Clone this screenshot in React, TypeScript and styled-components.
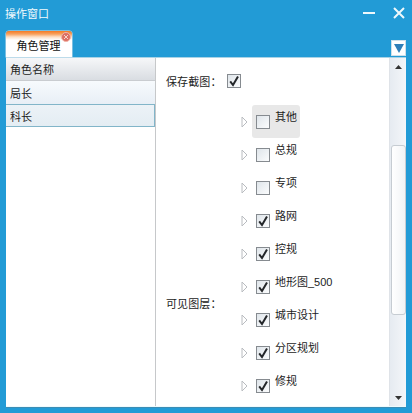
import React from "react";
import styled, { createGlobalStyle } from "styled-components";

const Global = createGlobalStyle`
  html, body { margin: 0; padding: 0; background: #229bd6; }
  * { box-sizing: border-box; }
`;

const Win = styled.div`
  width: 412px; height: 413px; background: #229bd6; overflow: hidden;
  display: flex; flex-direction: column;
  font-family: "Liberation Sans", "Noto Sans CJK SC", sans-serif;
  font-size: 11px; color: #222;
`;
const TitleBar = styled.div`
  height: 30px; flex: none; display: flex; align-items: center; justify-content: space-between;
  padding: 0 7px 5px 5px; color: #f2fafd; font-size: 11px;
`;
const Controls = styled.div`display: flex; align-items: center; gap: 18px;`;
const TabStrip = styled.div`
  height: 27px; flex: none; display: flex; justify-content: space-between; align-items: flex-end;
  padding: 0 6px;
`;
const Tab = styled.div`
  position: relative; width: 66px; height: 26px; border-radius: 3px 3px 0 0;
  background: linear-gradient(#f47a24 0, #f8a05c 3px, #fde0c8 6px, #fff 9px);
  display: flex; align-items: center; justify-content: center; padding: 2px 1px 0 0;
  color: #111; font-size: 11px; box-shadow: 0 0 0 0.5px #cfe3ee;
`;
const TabClose = styled.span`
  position: absolute; top: 1px; right: 1px; width: 10px; height: 10px; border-radius: 50%;
  background: #dd6f62; border: 1px solid #f0b4a8;
  display: flex; align-items: center; justify-content: center;
`;
const Collapse = styled.div`
  width: 15px; height: 16px; background: #fff; border: 1px solid #cfe0ea;
  display: flex; align-items: center; justify-content: center; margin-bottom: 1px;
`;
const Panel = styled.div`
  height: 350px; flex: none; margin: 0 6px; background: #fff; display: flex;
  border-top: 1px solid #a9d3e6; border-bottom: 1px solid #eefafd; box-shadow: 0 1px 0 #3b8db5;
`;
const Side = styled.div`width: 150px; flex: none; border-right: 1px solid #c6c8ca; display: flex; flex-direction: column;`;
const SideHead = styled.div`
  height: 23px; display: flex; align-items: center; padding-left: 4px;
  background: linear-gradient(#f6f7f9, #d9dde2); border-bottom: 1px solid #c9ccd0;
`;
const SideRow = styled.div<{ $selected?: boolean }>`
  height: ${(p) => (p.$selected ? "23px" : "23px")}; display: flex; align-items: center; padding-left: 4px;
  background: ${(p) => (p.$selected ? "linear-gradient(#ecf2f7,#e4edf3)" : "linear-gradient(#f7fafd,#e8eff6)")};
  border: ${(p) => (p.$selected ? "1px solid #82b5c9" : "none")};
  border-left-width: ${(p) => (p.$selected ? "0" : "0")};
`;
const Main = styled.div`flex: 1; overflow: hidden; display: flex; flex-direction: column; padding: 14px 0 0 10px;`;
const SaveRow = styled.div`height: 17px; display: flex; align-items: center; flex: none;`;
const FormLabel = styled.span`width: 61px; flex: none; white-space: nowrap; letter-spacing: 0.1px;`;
const LayersRow = styled.div`display: flex; align-items: center; margin-top: 16px; height: 396px; flex: none;`;
const Tree = styled.div`display: flex; flex-direction: column; margin-left: 14px; align-self: flex-start;`;
const Node = styled.div`height: 33px; display: flex; align-items: flex-start; width: 60px;`;
const Arrow = styled.svg`width: 7px; height: 12px; margin-top: 11px; flex: none;`;
const Hover = styled.div<{ $on?: boolean }>`
  display: flex; align-items: flex-start; margin-left: 4px; width: 48px; height: 33px; padding: 0 0 0 4px; border-radius: 3px;
  background: ${(p) => (p.$on ? "#e8e8e8" : "transparent")};
`;
const Box = styled.span`
  width: 14px; height: 14px; flex: none; margin-top: 10px; border: 1px solid #868b90; background: linear-gradient(135deg,#dfe5ea,#fbfcfd);
  display: flex; align-items: center; justify-content: center;
`;
const SaveBox = styled(Box)`margin-top: 0;`;
const Name = styled.span`margin-left: 5px; margin-top: 5px; white-space: nowrap; line-height: 14px; color: #1c1c1c;`;
const Scroll = styled.div`width: 17px; flex: none; border-left: 1px solid #dfe3e8; background: linear-gradient(90deg,#e6ebf1,#f4f6f9); display: flex; flex-direction: column; align-items: center; position: relative; justify-content: space-between; padding: 7px 0 6px;`;
const Thumb = styled.div`position: absolute; top: 87px; left: 1px; width: 15px; height: 170px; border: 1px solid #c6ccd2; border-radius: 3px; background: linear-gradient(90deg,#fff,#f1f3f5);`;

const Check = () => (
  <svg width="12" height="12" viewBox="0 0 12 12"><path d="M2.2 6.4 L5 10 L10 1.5" fill="none" stroke="#24272a" strokeWidth="2" /></svg>
);
const items: [string, boolean][] = [
  ["其他", false], ["总规", false], ["专项", false], ["路网", true], ["控规", true],
  ["地形图_500", true], ["城市设计", true], ["分区规划", true], ["修规", true],
];

export default function App() {
  return (
    <Win>
      <Global />
      <TitleBar>
        <span>操作窗口</span>
        <Controls>
          <svg width="12" height="12" viewBox="0 0 12 12"><path d="M0 6h12" stroke="#eef8fc" strokeWidth="2" /></svg>
          <svg width="12" height="12" viewBox="0 0 12 12"><path d="M1 1l10 10M11 1L1 11" stroke="#eef8fc" strokeWidth="2" /></svg>
        </Controls>
      </TitleBar>
      <TabStrip>
        <Tab>
          角色管理
          <TabClose>
            <svg width="6" height="6" viewBox="0 0 6 6"><path d="M1 1l4 4M5 1L1 5" stroke="#f6d3cc" strokeWidth="1" /></svg>
          </TabClose>
        </Tab>
        <Collapse>
          <svg width="10" height="9" viewBox="0 0 10 9"><path d="M0 0h10L5 9z" fill="#2f7fb8" /></svg>
        </Collapse>
      </TabStrip>
      <Panel>
        <Side>
          <SideHead>角色名称</SideHead>
          <SideRow>局长</SideRow>
          <SideRow $selected>科长</SideRow>
        </Side>
        <Main>
          <SaveRow>
            <FormLabel>保存截图：</FormLabel>
            <SaveBox><Check /></SaveBox>
          </SaveRow>
          <LayersRow>
            <FormLabel>可见图层：</FormLabel>
            <Tree>
              {items.map(([n, c], i) => (
                <Node key={n}>
                  <Arrow viewBox="0 0 7 12"><path d="M1 1l5 5-5 5z" fill="#fff" stroke="#b9bcc0" /></Arrow>
                  <Hover $on={i === 0}>
                    <Box>{c && <Check />}</Box>
                    <Name>{n}</Name>
                  </Hover>
                </Node>
              ))}
            </Tree>
          </LayersRow>
        </Main>
        <Scroll>
          <svg width="7" height="4" viewBox="0 0 7 4"><path d="M0 4L3.5 0 7 4z" fill="#333" /></svg>
          <Thumb />
          <svg width="7" height="4" viewBox="0 0 7 4"><path d="M0 0L3.5 4 7 0z" fill="#333" /></svg>
        </Scroll>
      </Panel>
    </Win>
  );
}
